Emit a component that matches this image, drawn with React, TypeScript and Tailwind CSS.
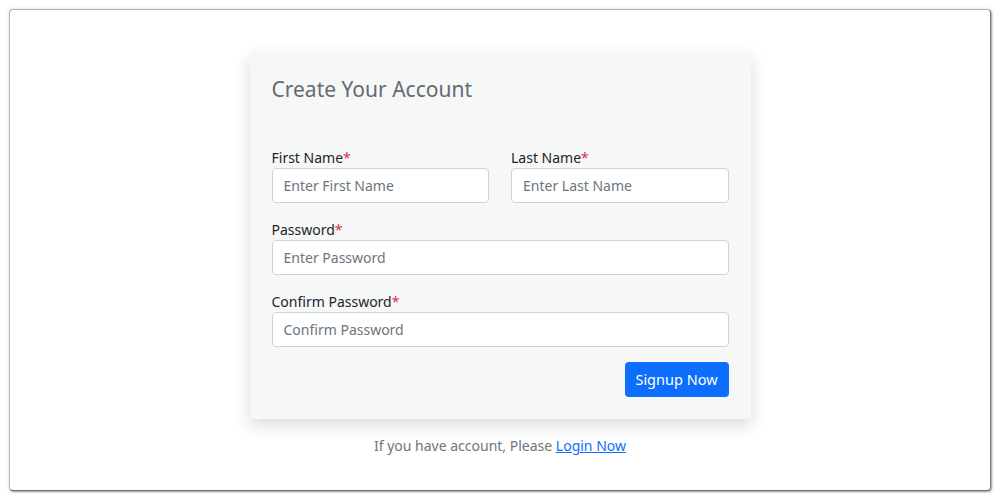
import React from "react";

const font = { fontFamily: '"Noto Sans", "Open Sans", sans-serif' };

function Field({ label, placeholder, className = "" }: { label: string; placeholder: string; className?: string }) {
  return (
    <div className={"flex flex-col " + className}>
      <label className="h-[21px] text-[14px] leading-[21px] text-[#212529] mb-[0px]">
        {label}
        <span className="text-[#dc3545]">*</span>
      </label>
      <input
        placeholder={placeholder}
        className="h-[35px] w-full rounded-[4px] border border-[#ced4da] bg-white px-[11px] text-[14px] text-[#212529] outline-none placeholder:text-[#6c757d]"
        style={font}
      />
    </div>
  );
}

export default function App() {
  return (
    <div className="h-[500px] w-[1000px] bg-white p-[9px]" style={font}>
      <div className="flex h-[482px] w-[982px] flex-col items-center rounded-[4px] border border-[#b5b5b5] border-r-[#7a7a7a] border-b-[#6e6e6e] bg-white shadow-[1px_1px_2px_rgba(0,0,0,0.35),0_0_4px_rgba(0,0,0,0.12)]">
        <div className="mt-[42px] w-[501px] bg-[#f6f7f7] px-[22px] pt-[21px] pb-[22px] shadow-[0_6px_16px_rgba(0,0,0,0.15)]">
          <h2 className="h-[32px] text-[21px] leading-[32px] text-[#646c72]">Create Your Account</h2>
          <div className="mt-[42px] flex gap-[22px]">
            <Field label="First Name" placeholder="Enter First Name" className="flex-1" />
            <Field label="Last Name" placeholder="Enter Last Name" className="flex-1" />
          </div>
          <Field label="Password" placeholder="Enter Password" className="mt-[16px]" />
          <Field label="Confirm Password" placeholder="Confirm Password" className="mt-[16px]" />
          <div className="mt-[15px] flex justify-end">
            <button className="h-[35px] w-[104px] rounded-[4px] bg-[#0d6efd] text-[14.5px] text-white">Signup Now</button>
          </div>
        </div>
        <p className="mt-[17px] text-[14px] leading-[20px] text-[#6c757d]">
          If you have account, Please{" "}
          <a href="#" className="text-[#0d6efd] underline">
            Login Now
          </a>
        </p>
      </div>
    </div>
  );
}
